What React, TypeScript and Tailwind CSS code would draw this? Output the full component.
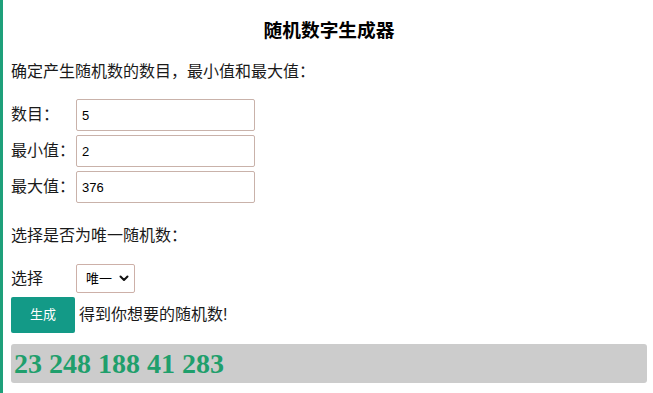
import { useState } from 'react';

const cjk = '[font-family:"Liberation_Sans","Noto_Sans_CJK_SC",sans-serif]';

export default function App() {
  const [count, setCount] = useState('5');
  const [min, setMin] = useState('2');
  const [max, setMax] = useState('376');
  const [result] = useState('23 248 188 41 283');

  const rows = [
    { label: '数目：', value: count, set: setCount },
    { label: '最小值：', value: min, set: setMin },
    { label: '最大值：', value: max, set: setMax },
  ];

  return (
    <div className={`w-[653px] h-[393px] overflow-hidden bg-white border-l-[3px] border-[#1ea07a] pl-2 pr-[6px] text-[16px] text-[#1a1a1a] ${cjk}`}>
      <h1 className="mt-[19px] text-center text-[18.72px] leading-[24px] font-bold text-black">随机数字生成器</h1>
      <p className="mt-[18px] leading-[22px]">确定产生随机数的数目，最小值和最大值：</p>

      <div className="mt-[16px] flex flex-col gap-1">
        {rows.map((r) => (
          <div key={r.label} className="flex items-center">
            <span className="w-[65px] leading-[22px]">{r.label}</span>
            <input
              value={r.value}
              onChange={(e) => r.set(e.target.value)}
              className="w-[179px] h-[32px] border border-[#c9b2aa] rounded-[2px] px-[5px] text-[13px] text-black outline-none [font-family:'Liberation_Sans',sans-serif]"
            />
          </div>
        ))}
      </div>

      <p className="mt-[22px] leading-[22px]">选择是否为唯一随机数：</p>

      <div className="mt-[17px] flex items-center">
        <span className="w-[65px] leading-[22px]">选择</span>
        <div className="w-[59px] h-[29px] border border-[#cdb0a8] rounded-[2px] flex items-center pl-[9px] gap-[7px] text-[13px] text-black">
          <span>唯一</span>
          <svg width="10" height="7" viewBox="0 0 10 7" fill="none">
            <path d="M1.5 1.5 L5 5 L8.5 1.5" stroke="#111" strokeWidth="2" strokeLinecap="round" strokeLinejoin="round" />
          </svg>
        </div>
      </div>

      <div className="mt-1 flex items-center gap-[4px]">
        <button className="w-[64px] h-[36px] bg-[#139a87] text-white text-[13px] rounded-[2px]">生成</button>
        <span className="leading-[22px]">得到你想要的随机数!</span>
      </div>

      <div className="mt-[11px] h-[39px] bg-[#cccccc] rounded-[3px] flex items-center pl-[3px]">
        <span className="text-[28px] font-bold text-[#1f9f6c] [font-family:'Liberation_Serif',serif]">{result}</span>
      </div>
    </div>
  );
}
